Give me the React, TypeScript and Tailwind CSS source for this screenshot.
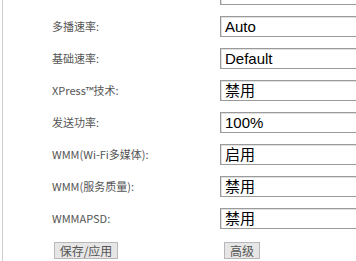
import React from 'react';

const rows: { label: string; value: string }[] = [
  { label: '', value: '' },
  { label: '多播速率:', value: 'Auto' },
  { label: '基础速率:', value: 'Default' },
  { label: 'XPress™技术:', value: '禁用' },
  { label: '发送功率:', value: '100%' },
  { label: 'WMM(Wi-Fi多媒体):', value: '启用' },
  { label: 'WMM(服务质量):', value: '禁用' },
  { label: 'WMMAPSD:', value: '禁用' },
];

const labelFont = { fontFamily: '"Noto Sans CJK SC", "Noto Sans", sans-serif' };
const valueFont = { fontFamily: '"Liberation Sans", "Noto Sans CJK SC", sans-serif' };

export default function App() {
  return (
    <div className="w-[356px] h-[261px] overflow-hidden bg-white flex">
      {/* left frame edge */}
      <div className="ml-[2px] w-[5px] h-full bg-[#e2e2e2] border-r border-[#cfcfcf]" />

      <div className="flex-1 flex flex-col">
        <div className="flex flex-col gap-[11px] mt-[-16px]">
          {rows.map((r, i) => (
            <div key={i} className="flex items-center h-[21px]">
              <span
                className="ml-[49px] w-[168px] text-[11px] text-[#555] whitespace-nowrap"
                style={labelFont}
              >
                {r.label}
              </span>
              <div
                className="w-[200px] h-[21px] border border-[#9a9a9a] shadow-[inset_1px_1px_0_#e0e0e0] bg-white flex items-center pl-[4px] text-[15px] text-black leading-none"
                style={valueFont}
              >
                {r.value}
              </div>
            </div>
          ))}
        </div>

        {/* buttons */}
        <div className="flex items-center mt-[13px]">
          <button
            className="ml-[51px] w-[64px] h-[17px] bg-[#e6e6e6] border border-[#b8b8b8] text-[12px] text-[#555] leading-none flex items-center justify-center"
            style={labelFont}
          >
            保存/应用
          </button>
          <button
            className="ml-[106px] w-[36px] h-[17px] bg-[#e6e6e6] border border-[#b8b8b8] text-[12px] text-[#555] leading-none flex items-center justify-center"
            style={labelFont}
          >
            高级
          </button>
        </div>
      </div>
    </div>
  );
}
